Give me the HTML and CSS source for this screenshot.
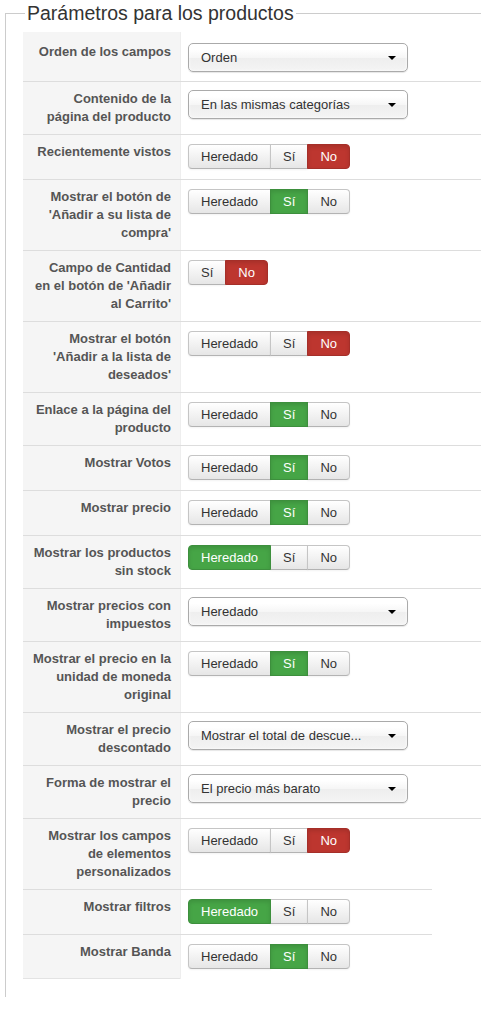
FILE: index.html
```html
<!DOCTYPE html>
<html lang="es">

<head>
    <meta charset="UTF-8">
    <meta name="viewport" content="width=device-width, initial-scale=1.0">
    <title>Parámetros para los productos</title>
    <link rel="stylesheet" href="styles.css">
</head>

<body>
    <fieldset class="params">
        <legend>Parámetros para los productos</legend>

        <div class="param-row first">
            <div class="param-label">Orden de los campos</div>
            <div class="param-value">
                <div class="select"><span>Orden</span><b class="caret"></b></div>
            </div>
        </div>

        <div class="param-row">
            <div class="param-label">Contenido de la página del producto</div>
            <div class="param-value">
                <div class="select"><span>En las mismas categorías</span><b class="caret"></b></div>
            </div>
        </div>

        <div class="param-row">
            <div class="param-label">Recientemente vistos</div>
            <div class="param-value">
                <div class="btn-group">
                    <span class="btn">Heredado</span><span class="btn">Sí</span><span class="btn no">No</span>
                </div>
            </div>
        </div>

        <div class="param-row">
            <div class="param-label">Mostrar el botón de 'Añadir a su lista de compra'</div>
            <div class="param-value">
                <div class="btn-group">
                    <span class="btn">Heredado</span><span class="btn yes">Sí</span><span class="btn">No</span>
                </div>
            </div>
        </div>

        <div class="param-row">
            <div class="param-label">Campo de Cantidad en el botón de 'Añadir al Carrito'</div>
            <div class="param-value">
                <div class="btn-group">
                    <span class="btn">Sí</span><span class="btn no">No</span>
                </div>
            </div>
        </div>

        <div class="param-row">
            <div class="param-label">Mostrar el botón 'Añadir a la lista de deseados'</div>
            <div class="param-value">
                <div class="btn-group">
                    <span class="btn">Heredado</span><span class="btn">Sí</span><span class="btn no">No</span>
                </div>
            </div>
        </div>

        <div class="param-row">
            <div class="param-label">Enlace a la página del producto</div>
            <div class="param-value">
                <div class="btn-group">
                    <span class="btn">Heredado</span><span class="btn yes">Sí</span><span class="btn">No</span>
                </div>
            </div>
        </div>

        <div class="param-row">
            <div class="param-label">Mostrar Votos</div>
            <div class="param-value">
                <div class="btn-group">
                    <span class="btn">Heredado</span><span class="btn yes">Sí</span><span class="btn">No</span>
                </div>
            </div>
        </div>

        <div class="param-row">
            <div class="param-label">Mostrar precio</div>
            <div class="param-value">
                <div class="btn-group">
                    <span class="btn">Heredado</span><span class="btn yes">Sí</span><span class="btn">No</span>
                </div>
            </div>
        </div>

        <div class="param-row">
            <div class="param-label">Mostrar los productos sin stock</div>
            <div class="param-value">
                <div class="btn-group">
                    <span class="btn yes">Heredado</span><span class="btn">Sí</span><span class="btn">No</span>
                </div>
            </div>
        </div>

        <div class="param-row">
            <div class="param-label">Mostrar precios con impuestos</div>
            <div class="param-value">
                <div class="select"><span>Heredado</span><b class="caret"></b></div>
            </div>
        </div>

        <div class="param-row">
            <div class="param-label">Mostrar el precio en la unidad de moneda original</div>
            <div class="param-value">
                <div class="btn-group">
                    <span class="btn">Heredado</span><span class="btn yes">Sí</span><span class="btn">No</span>
                </div>
            </div>
        </div>

        <div class="param-row">
            <div class="param-label">Mostrar el precio descontado</div>
            <div class="param-value">
                <div class="select"><span>Mostrar el total de descue...</span><b class="caret"></b></div>
            </div>
        </div>

        <div class="param-row">
            <div class="param-label">Forma de mostrar el precio</div>
            <div class="param-value">
                <div class="select"><span>El precio más barato</span><b class="caret"></b></div>
            </div>
        </div>

        <div class="param-row">
            <div class="param-label">Mostrar los campos de elementos personalizados</div>
            <div class="param-value">
                <div class="btn-group">
                    <span class="btn">Heredado</span><span class="btn">Sí</span><span class="btn no">No</span>
                </div>
            </div>
        </div>

        <div class="param-row narrow">
            <div class="param-label">Mostrar filtros</div>
            <div class="param-value">
                <div class="btn-group">
                    <span class="btn yes">Heredado</span><span class="btn">Sí</span><span class="btn">No</span>
                </div>
            </div>
        </div>

        <div class="param-row narrow last">
            <div class="param-label">Mostrar Banda</div>
            <div class="param-value">
                <div class="btn-group">
                    <span class="btn">Heredado</span><span class="btn yes">Sí</span><span class="btn">No</span>
                </div>
            </div>
        </div>
    </fieldset>
</body>

</html>
```

FILE: styles.css
```css
* {
    box-sizing: border-box;
}

body,
html {
    margin: 0;
    padding: 0;
    width: 100%;
    background-color: #ffffff;
    overflow: hidden;
    font-family: "Liberation Sans", Arial, Helvetica, sans-serif;
    font-size: 13px;
    line-height: 18px;
    color: #333333;
}

.params {
    margin: 0 0 0 5px;
    padding: 6px 0 18px 17px;
    border: none;
    border-top: 1px solid #cccccc;
    border-left: 1px solid #cccccc;
    min-width: 0;
}

.params legend {
    margin-left: 2px;
    padding: 0 2px;
    font-size: 19.5px;
    line-height: 26px;
    color: #333333;
}

/* one row of the settings table */
.param-row {
    display: grid;
    grid-template-columns: 157px 1fr;
    border-top: 1px solid #dddddd;
}

.param-row.first {
    border-top: none;
}

.param-row.narrow {
    width: 409px;
}

.param-label {
    background-color: #f5f5f5;
    padding: 8px 9px 8px 8px;
    text-align: right;
    font-weight: bold;
    color: #555555;
}

.param-row.first .param-label,
.param-row.first .param-value {
    padding-top: 11px;
}

.param-row.last .param-label {
    border-bottom: 1px solid #e3e3e3;
}

.param-value {
    padding: 8px 0 8px 7px;
    border-left: 1px solid #eeeeee;
}

/* dropdown */
.select {
    display: flex;
    align-items: center;
    width: 220px;
    height: 29px;
    margin-bottom: 1px;
    padding-left: 12px;
    border: 1px solid #aaaaaa;
    border-radius: 5px;
    background: linear-gradient(#ffffff 20%, #f6f6f6 50%, #eeeeee 52%, #f4f4f4 100%);
    box-shadow: 0 0 3px #ffffff inset, 0 1px 1px rgba(0, 0, 0, 0.1);
    color: #333333;
    white-space: nowrap;
}

.select span {
    flex: 1;
    overflow: hidden;
}

.select .caret {
    width: 0;
    height: 0;
    margin: 1px 11px 0 8px;
    border-top: 4px solid #000000;
    border-left: 4px solid transparent;
    border-right: 4px solid transparent;
}

/* yes / no toggles */
.btn-group {
    display: inline-flex;
    margin: 1px 0 2px;
}

.btn {
    display: inline-block;
    height: 25px;
    padding: 0 12px;
    line-height: 23px;
    border: 1px solid #c5c5c5;
    border-bottom-color: #b3b3b3;
    background: linear-gradient(#ffffff, #e6e6e6);
    color: #333333;
    box-shadow: inset 0 1px 0 rgba(255, 255, 255, 0.2), 0 1px 2px rgba(0, 0, 0, 0.05);
}

.btn + .btn {
    margin-left: -1px;
}

.btn:first-child {
    border-radius: 4px 0 0 4px;
}

.btn:last-child {
    border-radius: 0 4px 4px 0;
}

.btn.yes {
    background: #46a546;
    border-color: #3d8f3d;
    color: #ffffff;
    box-shadow: inset 0 2px 4px rgba(0, 0, 0, 0.12);
    position: relative;
}

.btn.no {
    background: #bd362f;
    border-color: #a52f29;
    color: #ffffff;
    box-shadow: inset 0 2px 4px rgba(0, 0, 0, 0.12);
    position: relative;
}
```
